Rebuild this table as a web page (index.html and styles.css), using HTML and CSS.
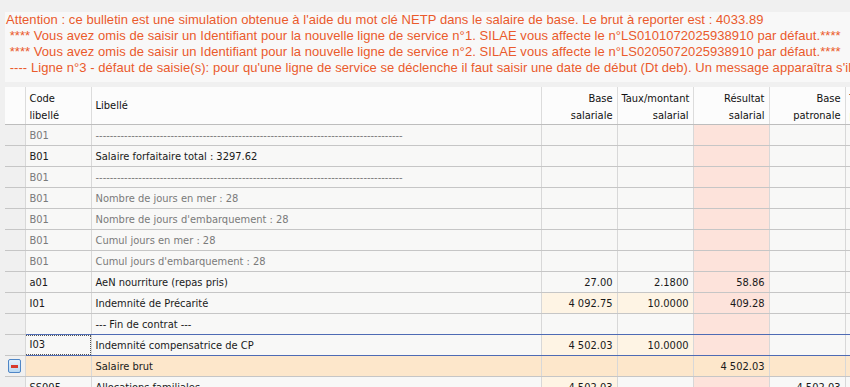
FILE: index.html
```html
<!DOCTYPE html>
<html lang="fr">
<head>
<meta charset="utf-8">
<title>Bulletin</title>
<link rel="stylesheet" href="styles.css">
</head>
<body>
<div class="notice">
  <div>Attention : ce bulletin est une simulation obtenue à l'aide du mot clé NETP dans le salaire de base. Le brut à reporter est : 4033.89</div>
  <div>&nbsp;**** Vous avez omis de saisir un Identifiant pour la nouvelle ligne de service n°1. SILAE vous affecte le n°LS0101072025938910 par défaut.****</div>
  <div>&nbsp;**** Vous avez omis de saisir un Identifiant pour la nouvelle ligne de service n°2. SILAE vous affecte le n°LS0205072025938910 par défaut.****</div>
  <div>&nbsp;---- Ligne n°3 - défaut de saisie(s): pour qu'une ligne de service se déclenche il faut saisir une date de début (Dt deb). Un message apparaîtra s'il manque des informations.</div>
</div>
<table class="grid">
  <colgroup>
    <col class="c-tool"><col class="c-code"><col class="c-lib">
    <col class="c-num"><col class="c-num"><col class="c-num"><col class="c-num"><col class="c-num"><col class="c-num">
  </colgroup>
  <thead>
    <tr>
      <th></th>
      <th class="l">Code<br>libellé</th>
      <th class="l mid">Libellé</th>
      <th>Base<br>salariale</th>
      <th>Taux/montant<br>salarial</th>
      <th>Résultat<br>salarial</th>
      <th>Base<br>patronale</th>
      <th class="l">Taux/montant<br>patronal</th>
      <th>Résultat<br>patronal</th>
    </tr>
  </thead>
  <tbody>
    <tr class="muted"><td class="tool"></td><td>B01</td><td>--------------------------------------------------------------------------------------</td><td></td><td></td><td class="res"></td><td></td><td></td><td></td></tr>
    <tr class="dark"><td class="tool"></td><td>B01</td><td>Salaire forfaitaire total : 3297.62</td><td></td><td></td><td class="res"></td><td></td><td></td><td></td></tr>
    <tr class="muted"><td class="tool"></td><td>B01</td><td>--------------------------------------------------------------------------------------</td><td></td><td></td><td class="res"></td><td></td><td></td><td></td></tr>
    <tr class="muted"><td class="tool"></td><td>B01</td><td>Nombre de jours en mer : 28</td><td></td><td></td><td class="res"></td><td></td><td></td><td></td></tr>
    <tr class="muted"><td class="tool"></td><td>B01</td><td>Nombre de jours d'embarquement : 28</td><td></td><td></td><td class="res"></td><td></td><td></td><td></td></tr>
    <tr class="muted"><td class="tool"></td><td>B01</td><td>Cumul jours en mer : 28</td><td></td><td></td><td class="res"></td><td></td><td></td><td></td></tr>
    <tr class="muted"><td class="tool"></td><td>B01</td><td>Cumul jours d'embarquement : 28</td><td></td><td></td><td class="res"></td><td></td><td></td><td></td></tr>
    <tr class="dark"><td class="tool"></td><td>a01</td><td>AeN nourriture (repas pris)</td><td class="n">27.00</td><td class="n">2.1800</td><td class="n res">58.86</td><td></td><td></td><td></td></tr>
    <tr class="dark"><td class="tool"></td><td>I01</td><td>Indemnité de Précarité</td><td class="n cream">4 092.75</td><td class="n cream">10.0000</td><td class="n res">409.28</td><td></td><td></td><td></td></tr>
    <tr class="dark"><td class="tool"></td><td></td><td>--- Fin de contrat ---</td><td></td><td></td><td class="res"></td><td></td><td></td><td></td></tr>
    <tr class="dark sel"><td class="tool"></td><td class="focus-cell"><span class="focus">I03</span></td><td>Indemnité compensatrice de CP</td><td class="n cream">4 502.03</td><td class="n cream">10.0000</td><td class="res"></td><td></td><td></td><td></td></tr>
    <tr class="dark total"><td class="tool"><span class="collapse"></span></td><td></td><td>Salaire brut</td><td></td><td></td><td class="n">4 502.03</td><td></td><td></td><td></td></tr>
    <tr class="dark"><td class="tool"></td><td>SS005</td><td>Allocations familiales</td><td class="n cream">4 502.03</td><td></td><td class="res"></td><td class="n">4 502.03</td><td></td><td></td></tr>
  </tbody>
</table>
</body>
</html>
```
FILE: styles.css
```css
html, body {
  margin: 0;
  padding: 0;
  background: #f0f0f0;
  overflow: hidden;
}

.notice {
  margin: 12px 0 5px 5px;
  padding: 0 0 6px 1px;
  background: #f8f8f8;
  color: #ea5a2c;
  font-family: "Liberation Sans", Arial, sans-serif;
  font-size: 13px;
  letter-spacing: 0.06px;
  line-height: 16px;
  white-space: nowrap;
}

.grid {
  margin-left: 5px;
  border-collapse: collapse;
  table-layout: fixed;
  width: 992px;
  font-family: "DejaVu Sans Condensed", "DejaVu Sans", sans-serif;
  font-size: 11px;
  color: #222;
}

.c-tool { width: 20px; }
.c-code { width: 66px; }
.c-lib { width: 450px; }
.c-num { width: 76px; }

.grid th {
  height: 37px;
  padding: 0 4px;
  background: #fcfcfc;
  font-weight: normal;
  text-align: right;
  vertical-align: bottom;
  line-height: 17px;
  color: #111;
  border-left: 1px solid #dcdcdc;
  border-bottom: 1px solid #bdbdbd;
  white-space: nowrap;
  overflow: hidden;
}
.grid th:first-child { border-left: none; }
.grid th.l { text-align: left; }
.grid th.mid { vertical-align: middle; line-height: 16px; }

.grid td {
  height: 18px;
  padding: 2px 4px 0;
  background: #f8f8f7;
  border-left: 1px solid #d8d8d8;
  border-bottom: 1px solid #c6c6c6;
  white-space: nowrap;
  overflow: hidden;
  line-height: 14px;
}
.grid td.tool {
  background: #f0f0f0;
  border-left: none;
  padding: 0;
  text-align: center;
}
.grid td.n { text-align: right; }
.grid td.res { background: #fde3db; }
.grid td.cream { background: #fef4e4; }

.muted td { color: #7a7a7a; }
.dark td { color: #1a1a1a; }

.total td { background: #fde7cb; }
.total td.tool { background: #f0f0f0; }
.total td.res { background: #fde7cb; }

.sel td:not(.tool) {
  border-bottom: 1px solid #4e6bb4;
}
tr:has(+ .sel) td:not(.tool) {
  border-bottom: 1px solid #4e6bb4;
}

.grid td.focus-cell { padding: 1px 1px 1px 0; }
.focus {
  display: block;
  padding: 0 0 0 4px;
  line-height: 18px;
  outline: 1px dotted #555;
}

.collapse {
  display: inline-block;
  vertical-align: middle;
  width: 11px;
  height: 12px;
  border: 1px solid #4f86c6;
  border-radius: 2px;
  background: linear-gradient(#e4f1fc, #b9d8f2);
  position: relative;
}
.collapse::after {
  content: "";
  position: absolute;
  left: 2px;
  right: 2px;
  top: 5px;
  height: 3px;
  background: #d83a2e;
}
```
